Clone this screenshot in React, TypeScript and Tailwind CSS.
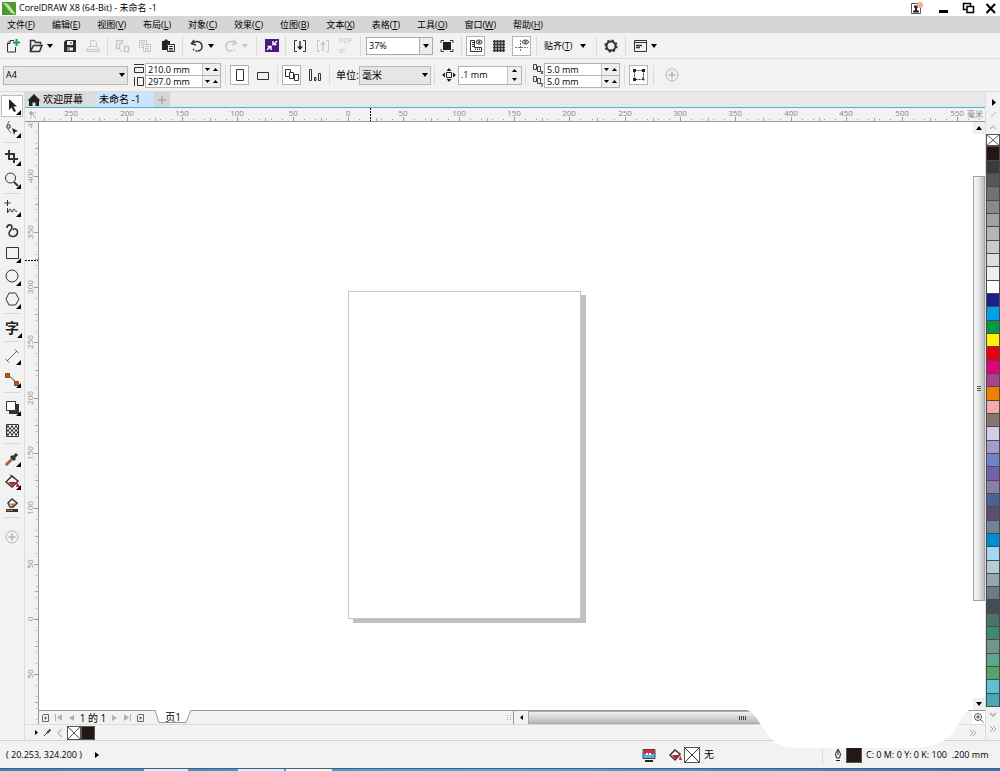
import type { ReactNode } from 'react'
import { clsx } from 'clsx'

const MENUS = [
  ['文件', 'F'],
  ['编辑', 'E'],
  ['视图', 'V'],
  ['布局', 'L'],
  ['对象', 'C'],
  ['效果', 'C'],
  ['位图', 'B'],
  ['文本', 'X'],
  ['表格', 'T'],
  ['工具', 'O'],
  ['窗口', 'W'],
  ['帮助', 'H'],
]

const PALETTE = [
  '#231815', '#3e3a39', '#595757', '#727171', '#898989', '#9fa0a0', '#b5b5b6',
  '#c9caca', '#dcdddd', '#efefef', '#ffffff', '#1d2088', '#00a0e9', '#009944',
  '#fff100', '#e60012', '#e4007f', '#a9438c', '#ee8200', '#f4aaa9', '#85756a',
  '#d3cce6', '#a899ca', '#6a86c6', '#7561aa', '#8d7cab', '#4a6492', '#57506f',
  '#71819b', '#008bd5', '#9fd9f6', '#b5ccd9', '#93a5ae', '#6c7b84', '#434d55',
  '#4f716c', '#3f8b70', '#73958f', '#58a78f', '#57a36a', '#5bc2d0', '#4aa8b4',
]

// pixels per millimetre at the current zoom, and where 0 sits on each ruler
const SCALE = 1.107
const ORIGIN_X = 309
const ORIGIN_Y = 497

interface IconProps {
  children: ReactNode
  size?: number
  className?: string
}

function Icon({ children, size = 16, className }: IconProps) {
  return (
    <svg
      width={size}
      height={size}
      viewBox={`0 0 ${size} ${size}`}
      fill="none"
      stroke="currentColor"
      className={clsx('shrink-0', className)}
      aria-hidden="true"
    >
      {children}
    </svg>
  )
}

function Caret({ className }: { className?: string }) {
  return (
    <svg width="6" height="4" viewBox="0 0 6 4" className={className} aria-hidden="true">
      <path d="M0 0h6L3 4z" fill="currentColor" />
    </svg>
  )
}

interface ToolButtonProps {
  label: string
  children: ReactNode
  framed?: boolean
  disabled?: boolean
}

function ToolButton({ label, children, framed, disabled }: ToolButtonProps) {
  return (
    <button
      type="button"
      aria-label={label}
      disabled={disabled}
      className={clsx(
        'flex w-[23px] shrink-0 items-center justify-center',
        disabled ? 'text-[#c6c6c6]' : 'text-[#333]',
      )}
    >
      <span
        className={clsx(
          'flex h-5 w-[19px] items-center justify-center',
          framed && 'border border-[#b4b4b4] bg-white',
        )}
      >
        {children}
      </span>
    </button>
  )
}

function CaretButton({ label, disabled }: { label: string; disabled?: boolean }) {
  return (
    <button
      type="button"
      aria-label={label}
      disabled={disabled}
      className={clsx('flex w-[11px] shrink-0 items-center', disabled ? 'text-[#c6c6c6]' : 'text-black')}
    >
      <Caret />
    </button>
  )
}

function Separator() {
  return (
    <div className="flex w-1.5 shrink-0 justify-center">
      <div className="h-5 w-px bg-[#dadada]" />
    </div>
  )
}

function TitleBar() {
  return (
    <header className="flex h-4 items-center bg-white px-0.5">
      <Icon size={14}>
        <path d="M0 1h14v13H0z" fill="#4f9a2d" stroke="none" />
        <path d="M1 1.500L6 3l7.500 10.500L9 12z" fill="#fff" stroke="none" />
        <path d="M2.500 2l7.500 11M4.500 2.500l7.500 11" stroke="#4f9a2d" strokeWidth=".6" />
      </Icon>
      <h1 className="ml-[3px] flex-1 text-[9px] leading-4 text-black">CorelDRAW X8 (64-Bit) - 未命名 -1</h1>
      <div className="flex items-center gap-3 text-black">
        <button type="button" aria-label="登录">
          <Icon size={14}>
            <path d="M1.500 2.500h9v10h-9z" stroke="#555" />
            <path d="M3 11.500h6v-1.500L7 9V7.500L8 6V4.500H4V6l1 1.500V9l-2 1z" fill="#222" stroke="none" />
            <circle cx="10" cy="4" r="3" fill="#f4b183" stroke="none" />
          </Icon>
        </button>
        <button type="button" aria-label="最小化">
          <Icon size={14}>
            <path d="M3 10.500h9" strokeWidth="3" />
          </Icon>
        </button>
        <button type="button" aria-label="还原">
          <Icon size={14}>
            <path d="M4.500 8.500h-3v-6h7v3" strokeWidth="1.500" />
            <path d="M5 5.500h6.500v6H5z" strokeWidth="1.500" />
          </Icon>
        </button>
        <button type="button" aria-label="关闭" className="-ml-1">
          <Icon size={14}>
            <path d="M2.500 3l8.500 9M11 3l-8.500 9" strokeWidth="2" />
          </Icon>
        </button>
      </div>
    </header>
  )
}

function MenuBar() {
  return (
    <nav className="flex h-[17px] items-center gap-[17px] bg-[#d6d6d6] pl-[7px]">
      {MENUS.map(([name, key]) => (
        <button key={name} type="button" className="shrink-0 text-[9px] leading-4 text-black">
          {name}(<span className="underline">{key}</span>)
        </button>
      ))}
    </nav>
  )
}

function StandardToolbar() {
  return (
    <div className="flex h-[26px] items-center border-b border-[#dcdcdc] pl-px">
      <ToolButton label="新建">
        <Icon>
          <path d="M9 2.500H5L2.500 5v9h8V9M5 3v2.500H2.500" />
          <path d="M11.500 1v7M8 4.500h7" stroke="#16a34a" strokeWidth="2" />
        </Icon>
      </ToolButton>
      <ToolButton label="打开">
        <Icon>
          <path d="M2.500 13V2.500h4l1 2h5v2M2.500 13.500h9l2.500-6H5.500z" strokeWidth="1.500" />
        </Icon>
      </ToolButton>
      <CaretButton label="最近的文件" />
      <ToolButton label="保存">
        <Icon>
          <path d="M2 4l2-2h10v12H2z" fill="#2b2b2b" stroke="none" />
          <path d="M5 3h6v4H5zM5 9.500h6v3H5z" fill="#f2f2f2" stroke="none" />
          <path d="M9 4v2M5 11h3" />
        </Icon>
      </ToolButton>
      <ToolButton label="打印" disabled>
        <Icon>
          <path d="M5.500 8V2.500h4l2 2V8M4 8.500l-2 2v3h12v-3l-2-2zM2 11.500h12" />
        </Icon>
      </ToolButton>
      <Separator />
      <ToolButton label="剪切" disabled>
        <Icon>
          <path d="M2.500 2.500h6v3M2.500 2.500v8h3v-5h3M11.500 8.500h3v5h-4v-5zM7 12v2" strokeWidth="1.500" />
        </Icon>
      </ToolButton>
      <ToolButton label="复制" disabled>
        <Icon>
          <path d="M6 9.500H2.500v-7h7V6M4 4.500h4M4 6.500h2M6.500 6.500h7v7h-7zM8 8.500h4M8 10.500h4M8 12h4" />
        </Icon>
      </ToolButton>
      <ToolButton label="粘贴">
        <Icon>
          <path d="M2 3h2l1-1.500h2L8 3h2v3H7v6H2z" fill="#222" stroke="none" />
          <path d="M7.500 6.500h7v7h-7zM9 8.500h4M9 10.500h4M9 12h4" />
        </Icon>
      </ToolButton>
      <Separator />
      <ToolButton label="撤消">
        <Icon>
          <path d="M5 2L2.500 5.500 7 7" strokeWidth="1.500" />
          <path d="M3 5.500C7 2 13 3.500 13 8.500c0 2.500-2 4.500-4.500 4.500" strokeWidth="1.500" />
          <path d="M8 13c-2 0-3.500-1-4-2.500" strokeWidth="1.500" strokeDasharray="1.500 1.500" />
        </Icon>
      </ToolButton>
      <CaretButton label="撤消列表" />
      <ToolButton label="重做" disabled>
        <Icon>
          <path d="M10.500 2L13 5.500 9 7" strokeWidth="1.500" />
          <path d="M12.500 5.500C9 2 3 3.500 3 8.500c0 2.500 2 4.500 4.500 4.500" strokeWidth="1.500" />
          <path d="M8 13c2 0 3.500-1 4-2.500" strokeWidth="1.500" strokeDasharray="1.500 1.500" />
        </Icon>
      </ToolButton>
      <CaretButton label="重做列表" disabled />
      <Separator />
      <ToolButton label="搜索内容">
        <Icon>
          <path d="M2 1h14v13H2z" fill="#4b1a80" stroke="none" />
          <path d="M4 12l3.500-3.500M14 3l-3.500 3.500M4.500 8.500H8V12M13.500 6.500H10V3" stroke="#fff" strokeWidth="1.500" />
        </Icon>
      </ToolButton>
      <Separator />
      <ToolButton label="导入">
        <Icon>
          <path d="M5 2.500H2.500v11H5M11 2.500h2.500v11H11" />
          <path d="M8 3v8" strokeWidth="1.500" />
          <path d="M5 8.500h6L8 12z" fill="#222" stroke="none" />
        </Icon>
      </ToolButton>
      <ToolButton label="导出" disabled>
        <Icon>
          <path d="M5 2.500H2.500v11H5M11 2.500h2.500v11H11" />
          <path d="M8 5v8" strokeWidth="1.500" />
          <path d="M5 6.500h6L8 3z" fill="currentColor" stroke="none" />
        </Icon>
      </ToolButton>
      <ToolButton label="发布为 PDF" disabled>
        <span className="flex flex-col text-left text-[7px] leading-[10px]">
          <span>PDF</span>
          <span>a!</span>
        </span>
      </ToolButton>
      <Separator />
      <div className="relative ml-[3px] mr-0.5 w-[67px] shrink-0">
        <select
          aria-label="缩放级别"
          className="block h-[18px] w-full appearance-none border border-[#a9a9a9] bg-white pl-0.5 text-[9px] text-black"
        >
          <option>37%</option>
        </select>
        <span className="pointer-events-none absolute inset-y-0 right-0 flex w-3.5 items-center justify-center border border-[#a9a9a9] bg-[#ececec]">
          <Caret />
        </span>
      </div>
      <ToolButton label="全屏预览">
        <Icon>
          <path d="M4 4h8v8H4z" fill="#222" stroke="none" />
          <path d="M2 5V2.500h3M11 2.500h3V5M14 11v2.500h-3M5 13.500H2V11" />
        </Icon>
      </ToolButton>
      <Separator />
      <ToolButton label="显示标尺" framed>
        <Icon>
          <path d="M2.500 2.500h4v7h7v4h-11zM4 4.500h2M4 6.500h2M4 8.500h2M7.500 12v-1.500M9.500 12v-1.500M11.500 12v-1.500" />
          <ellipse cx="11" cy="4" rx="3" ry="2" />
          <circle cx="11" cy="4" r=".8" />
        </Icon>
      </ToolButton>
      <ToolButton label="显示网格">
        <Icon>
          <path d="M2 3.500h12M2 6.500h12M2 9.500h12M2 12.500h12M3.500 2v12M6.500 2v12M9.500 2v12M12.500 2v12" strokeWidth="1.500" />
        </Icon>
      </ToolButton>
      <ToolButton label="显示辅助线" framed>
        <Icon>
          <path d="M1 9.500h13M6.500 2v12" stroke="#777" strokeDasharray="2 1" />
          <ellipse cx="11.500" cy="4" rx="3" ry="2" />
          <circle cx="11.500" cy="4" r=".8" />
        </Icon>
      </ToolButton>
      <Separator />
      <button type="button" className="flex w-[54px] shrink-0 items-center justify-between pl-[5px] pr-[7px] text-[9px] text-black">
        <span>
          贴齐(<span className="underline">T</span>)
        </span>
        <Caret />
      </button>
      <Separator />
      <ToolButton label="选项">
        <Icon>
          <circle cx="8" cy="8" r="4.500" strokeWidth="2" />
          <circle cx="8" cy="8" r="5.800" strokeWidth="1.600" strokeDasharray="2.200 2.355" />
        </Icon>
      </ToolButton>
      <Separator />
      <ToolButton label="应用程序启动器">
        <Icon>
          <path d="M2.500 2.500h12v11h-12zM2.500 4.500h12" />
          <path d="M4 7.500h6M4 9.500h4" strokeWidth="1.500" />
        </Icon>
      </ToolButton>
      <CaretButton label="启动器菜单" />
    </div>
  )
}

interface SpinFieldProps {
  label: string
  value: string
}

function SpinField({ label, value }: SpinFieldProps) {
  return (
    <div className="flex h-[13px] border border-[#b4b4b4] bg-white not-first:-mt-px">
      <input
        aria-label={label}
        defaultValue={value}
        className="w-14 bg-transparent pl-0.5 text-[9px] leading-none text-black outline-none"
      />
      <div className="flex w-[18px] items-center justify-around border-l border-[#c4c4c4] bg-[#efefef]">
        <button type="button" aria-label={`${label} 减少`}>
          <Icon size={5}>
            <path d="M0 1h5L2.500 4z" fill="#000" stroke="none" />
          </Icon>
        </button>
        <button type="button" aria-label={`${label} 增加`}>
          <Icon size={5}>
            <path d="M0 4h5L2.500 1z" fill="#000" stroke="none" />
          </Icon>
        </button>
      </div>
    </div>
  )
}

interface ComboProps {
  id: string
  label: string
  value: string
  className: string
}

function Combo({ id, label, value, className }: ComboProps) {
  return (
    <div className={clsx('relative shrink-0', className)}>
      <select
        id={id}
        aria-label={label}
        className="block h-[19px] w-full appearance-none border border-[#b9b9b9] bg-[#e6e6e6] pl-0.5 text-black"
      >
        <option>{value}</option>
      </select>
      <span className="pointer-events-none absolute inset-y-0 right-[3px] flex items-center">
        <Caret />
      </span>
    </div>
  )
}

function PropertyBar() {
  return (
    <div className="flex h-[33px] items-center border-b border-[#dcdcdc] pl-[3px]">
      <Combo id="page-size" label="页面大小" value="A4" className="w-[125px] text-[9px]" />
      <div className="ml-[5px] flex flex-col text-[#333]">
        <Icon size={12}>
          <path d="M1 1.500h10M1.500 4.500h9v5h-9z" />
        </Icon>
        <Icon size={12}>
          <path d="M1.500 2v9M4.500 2.500h6v8h-6z" />
        </Icon>
      </div>
      <div className="mr-px flex flex-col">
        <SpinField label="页面宽度" value="210.0 mm" />
        <SpinField label="页面高度" value="297.0 mm" />
      </div>
      <Separator />
      <ToolButton label="纵向" framed>
        <Icon>
          <path d="M4.500 2.500h7v11h-7z" />
        </Icon>
      </ToolButton>
      <ToolButton label="横向">
        <Icon>
          <path d="M2.500 5.500h11v7h-11z" />
        </Icon>
      </ToolButton>
      <Separator />
      <ToolButton label="所有页面" framed>
        <Icon>
          <path d="M1.500 2.500h5v7h-5z" />
          <path d="M5.500 5.500h4v6h-4zM10.500 7.500h4v6h-4z" fill="#fff" />
        </Icon>
      </ToolButton>
      <ToolButton label="当前页">
        <Icon>
          <path d="M2.500 2.500h2v11h-2zM7.500 10.500h1.500v3H7.500zM11.500 6.500h2v7h-2z" />
        </Icon>
      </ToolButton>
      <Separator />
      <label htmlFor="units" className="w-[27px] shrink-0 whitespace-nowrap pl-1 text-[10px] text-black">
        单位:
      </label>
      <Combo id="units" label="单位" value="毫米" className="w-[72px] text-[10px]" />
      <Separator />
      <Icon className="ml-1 mr-px text-[#222]">
        <path d="M5.500 5.500h5v5h-5z" />
        <path d="M8 1l2.500 3h-5zM8 15l2.500-3h-5zM1 8l3-2.500v5zM15 8l-3-2.500v5z" fill="currentColor" stroke="none" />
      </Icon>
      <div className="flex h-[19px] w-16 shrink-0 border border-[#b4b4b4] bg-white">
        <input
          aria-label="微调距离"
          defaultValue=".1 mm"
          className="w-12 bg-transparent pl-0.5 text-[9px] text-black outline-none"
        />
        <div className="flex w-3.5 flex-col items-center justify-around border-l border-[#c4c4c4] bg-[#efefef]">
          <button type="button" aria-label="微调增加">
            <Icon size={5}>
              <path d="M0 4h5L2.500 1z" fill="#000" stroke="none" />
            </Icon>
          </button>
          <button type="button" aria-label="微调减少">
            <Icon size={5}>
              <path d="M0 1h5L2.500 4z" fill="#000" stroke="none" />
            </Icon>
          </button>
        </div>
      </div>
      <Separator />
      <div className="ml-1 flex flex-col text-[#444]">
        <Icon size={12}>
          <path d="M1.500 1.500h3v5h-3zM5.500 3.500h3v5h-3zM9 8l2 3M11 8l-2 3" />
        </Icon>
        <Icon size={12}>
          <path d="M1.500 1.500h3v5h-3zM5.500 3.500h3v5h-3zM9 8l1 1.500L11 8M10 9.500V12" />
        </Icon>
      </div>
      <div className="mr-px flex flex-col">
        <SpinField label="再制距离 X" value="5.0 mm" />
        <SpinField label="再制距离 Y" value="5.0 mm" />
      </div>
      <Separator />
      <ToolButton label="将所有对象视为已填充" framed>
        <Icon>
          <path d="M3.500 3.500h9v9h-9z" strokeDasharray="2 1" />
          <path d="M2 2h3v3H2zM11 2h3v3h-3zM2 11h3v3H2zM11 10l3 3-2 .5z" fill="#222" stroke="none" />
        </Icon>
      </ToolButton>
      <Separator />
      <button type="button" aria-label="快速自定义" className="ml-2 text-[#b5b5b5]">
        <Icon>
          <circle cx="8" cy="8" r="6" />
          <path d="M8 4.500v7M4.500 8h7" strokeWidth="1.500" />
        </Icon>
      </button>
    </div>
  )
}

interface ToolProps {
  label: string
  children: ReactNode
  active?: boolean
  flyout?: boolean
}

function Tool({ label, children, active, flyout }: ToolProps) {
  return (
    <button
      type="button"
      aria-label={label}
      className="flex h-[23px] items-center justify-center text-[#333]"
    >
      <span className={clsx('flex h-5 w-5', active && 'bg-white outline outline-[#bdbdbd]')}>
        <Icon size={20}>
          {children}
          {flyout && <path d="M19 14v5h-5z" fill="#000" stroke="none" />}
        </Icon>
      </span>
    </button>
  )
}

function ToolDivider() {
  return (
    <div className="flex h-[5px] items-center px-1">
      <div className="h-px flex-1 bg-[#dadada]" />
    </div>
  )
}

function Toolbox() {
  return (
    <aside className="flex w-[25px] shrink-0 flex-col border-r border-[#dcdcdc] pt-0.5">
      <Tool label="选择" active flyout>
        <path d="M7 3v11l2.500-2.500L12 16l2-1-2.500-4.500H15z" fill="#222" stroke="none" />
      </Tool>
      <Tool label="形状" flyout>
        <path d="M7.500 2c-4 5-2 8 1.500 12" stroke="#666" />
        <path d="M5 6h3v3H5z" fill="#fff" />
        <path d="M10 9l6 3-3 1-1 3z" fill="#222" stroke="none" />
      </Tool>
      <ToolDivider />
      <Tool label="裁剪" flyout>
        <path d="M7 3v9h9M3 7h9v9" strokeWidth="2" />
      </Tool>
      <Tool label="缩放" flyout>
        <circle cx="8.500" cy="8" r="5" />
        <path d="M12 12l4 4" strokeWidth="2" />
      </Tool>
      <ToolDivider />
      <Tool label="手绘" flyout>
        <path d="M5.500 2v6M2.500 5h6" />
        <path d="M5.500 10v5M5.500 14c2 1 1-3 2.500-3s.5 3 2 3 .5-3 2-3 .5 3 3 2.500" />
      </Tool>
      <Tool label="艺术笔">
        <path d="M5 7c0-4 5-4 5-1 0 3-3 4-3 6.500 0 4.500 8.500 4 8.500-1.500 0-3.500-3.500-4-4.500-2" strokeWidth="1.600" />
      </Tool>
      <Tool label="矩形" flyout>
        <path d="M4.500 3.500h12v11h-12z" />
      </Tool>
      <Tool label="椭圆形" flyout>
        <circle cx="10" cy="9" r="6" />
      </Tool>
      <Tool label="多边形" flyout>
        <path d="M7 3h6.500l3.500 6-3.500 6H7L4 9z" />
      </Tool>
      <ToolDivider />
      <button
        type="button"
        aria-label="文本"
        className="flex h-[23px] items-center justify-center text-sm font-bold text-[#222]"
      >
        <span className="relative flex h-5 w-5 items-center justify-center">
          字
          <Icon size={5} className="absolute bottom-0 right-0">
            <path d="M5 0v5H0z" fill="#000" stroke="none" />
          </Icon>
        </span>
      </button>
      <ToolDivider />
      <Tool label="平行度量" flyout>
        <path d="M5 15L15 5M3.500 13l3.500 3.500M13 3.500L16.500 7" stroke="#666" />
      </Tool>
      <Tool label="连接器" flyout>
        <path d="M6 6l9 8" />
        <path d="M3.500 4.500h4v4h-4zM12.500 12.500h4v4h-4z" fill="#b45a1e" stroke="#8a4516" />
      </Tool>
      <ToolDivider />
      <Tool label="阴影" flyout>
        <path d="M7 15.500h8.500V7" strokeWidth="3" />
        <path d="M4.500 4.500h9v9h-9z" fill="#fff" />
      </Tool>
      <Tool label="透明度">
        <path d="M4.500 4.500h12v12h-12z" />
        <path
          d="M5 6.500h12M5 10.500h12M5 14.500h12M7 8.500h10M7 12.500h10"
          strokeWidth="2"
          strokeDasharray="2 2"
        />
      </Tool>
      <ToolDivider />
      <Tool label="颜色滴管" flyout>
        <path d="M4 17l7-7" stroke="#7d7d7d" strokeWidth="3" />
        <path d="M4 17l4-4" stroke="#c0572a" strokeWidth="2" />
        <path d="M9 8l4 4M12 9l3-3" strokeWidth="3" />
      </Tool>
      <Tool label="交互式填充" flyout>
        <path d="M4 11l6-6 6 5-6 6z" fill="#fff" strokeWidth="1.500" />
        <path d="M6 11h8l-4 4z" fill="#d9182b" stroke="none" />
        <path d="M15 11l3 5h-4z" fill="#d9182b" stroke="none" />
        <path d="M8 3.500l4 4" />
      </Tool>
      <Tool label="智能填充">
        <path d="M6 9l4-4 5 4-4 4H8z" fill="#fff" strokeWidth="1.500" />
        <path d="M7 9.500h7l-3 3z" fill="#d46a2c" stroke="none" />
        <path d="M4 16.500h12" strokeWidth="3" />
        <path d="M4.500 16.500H11" stroke="#d46a2c" />
      </Tool>
      <ToolDivider />
      <div className="mt-[7px] flex justify-center text-[#b5b5b5]">
        <button type="button" aria-label="自定义工具箱">
          <Icon size={20}>
            <circle cx="10" cy="10" r="6" />
            <path d="M10 6.500v7M6.500 10h7" strokeWidth="1.500" />
          </Icon>
        </button>
      </div>
    </aside>
  )
}

function DocumentTabs() {
  return (
    <div className="flex h-4 border-b border-[#45b5dc] bg-[#e8e8e8] text-[10px] leading-[15px] text-black">
      <button type="button" className="flex w-[70px] items-center gap-0.5 bg-[#dcdcdc] pl-0.5">
        <Icon size={14}>
          <path d="M7 1l6.500 6.500H12V13H8.500V9.500h-3V13H2V7.500H.5z" fill="#222" stroke="none" />
        </Icon>
        欢迎屏幕
      </button>
      <button type="button" className="w-[59px] bg-[#cbe4fb] pl-1 text-left">
        未命名 -1
      </button>
      <button type="button" aria-label="新建文档" className="flex w-4 items-center justify-center bg-[#d4d4d4] text-[#aaa]">
        <Icon size={10}>
          <path d="M5 1v8M1 5h8" strokeWidth="1.500" />
        </Icon>
      </button>
    </div>
  )
}

// one entry per 10 mm
const STEPS = Array.from({ length: 240 }, (_, i) => i - 80)

function HorizontalRuler() {
  return (
    <svg className="h-[13px] min-w-0 flex-1 text-[8px]" aria-hidden="true">
      {STEPS.map((step) => {
        const x = Math.round(ORIGIN_X + step * 10 * SCALE)
        const major = step % 5 === 0
        return (
          <g key={step}>
            <rect x={x} y={major ? 9 : 11} width="1" height={major ? 4 : 1} fill="#999" />
            {major && (
              <rect x={Math.round(x + 25 * SCALE)} y="10" width="1" height="3" fill="#aaa" />
            )}
            {major && step >= -25 && step <= 55 && (
              <text x={x} y="8" textAnchor="middle" fill="#888">
                {Math.abs(step * 10)}
              </text>
            )}
          </g>
        )
      })}
      <path d="M331.500 0v13" stroke="#000" strokeDasharray="2 1" />
    </svg>
  )
}

function VerticalRuler() {
  return (
    <svg className="w-[13px] shrink-0 text-[8px]" aria-hidden="true">
      {STEPS.map((step) => {
        const y = Math.round(ORIGIN_Y - step * 10 * SCALE)
        const major = step % 5 === 0
        return (
          <g key={step}>
            <rect x={major ? 9 : 11} y={y} width={major ? 4 : 1} height="1" fill="#999" />
            {major && (
              <rect x="10" y={Math.round(y - 25 * SCALE)} width="3" height="1" fill="#aaa" />
            )}
            {major && step >= -5 && step <= 45 && (
              <text x="8" y={y} textAnchor="middle" fill="#888" transform={`rotate(-90 8 ${y})`}>
                {Math.abs(step * 10)}
              </text>
            )}
          </g>
        )
      })}
      <path d="M0 138.500h13" stroke="#000" strokeDasharray="2 1" />
    </svg>
  )
}

function VerticalScrollbar() {
  return (
    <div className="flex w-3 shrink-0 flex-col">
      <button type="button" aria-label="向上滚动" className="flex h-3 items-center justify-center bg-[#efefef]">
        <Caret className="rotate-180" />
      </button>
      <div className="flex flex-1 flex-col pb-[97px] pt-[42px]">
        <div className="flex flex-1 flex-col items-center justify-center gap-px border border-[#a0a0a0] bg-linear-to-r from-[#f6f6f6] via-[#e6e6e6] to-[#bdbdbd]">
          <div className="h-px w-1 bg-[#555]" />
          <div className="h-px w-1 bg-[#555]" />
          <div className="h-px w-1 bg-[#555]" />
        </div>
      </div>
      <button type="button" aria-label="向下滚动" className="flex h-3 items-center justify-center bg-[#efefef]">
        <Caret />
      </button>
    </div>
  )
}

function PageNavigator() {
  return (
    <div className="flex h-3.5 items-stretch border-t border-[#969696] text-[#b0b0b0]">
      <div className="flex w-[116px] shrink-0 items-center justify-between pl-0.5 pr-2.5">
        <button type="button" aria-label="在前面添加页" className="text-[#666]">
          <Icon size={9}>
            <path d="M1.500 2.500l1-1h5v7h-6zM3 5h3M4.500 3.500v3" />
          </Icon>
        </button>
        <button type="button" aria-label="第一页">
          <Icon size={9}>
            <path d="M1.500 1v7" />
            <path d="M8 1v7L3 4.500z" fill="currentColor" stroke="none" />
          </Icon>
        </button>
        <button type="button" aria-label="上一页">
          <Icon size={8}>
            <path d="M7 1v6L2 4z" fill="currentColor" stroke="none" />
          </Icon>
        </button>
        <span className="whitespace-pre text-[10px] leading-3 text-black">1 的 1</span>
        <button type="button" aria-label="下一页">
          <Icon size={8}>
            <path d="M1 1v6l5-3z" fill="currentColor" stroke="none" />
          </Icon>
        </button>
        <button type="button" aria-label="最后一页">
          <Icon size={9}>
            <path d="M7.500 1v7" />
            <path d="M1 1v7l5-3.500z" fill="currentColor" stroke="none" />
          </Icon>
        </button>
        <button type="button" aria-label="在后面添加页" className="text-[#666]">
          <Icon size={9}>
            <path d="M1.500 2.500l1-1h5v7h-6zM3 5h3M4.500 3.500v3" />
          </Icon>
        </button>
      </div>
      <button type="button" className="relative -mt-px w-9 shrink-0 text-[10px] leading-[13px] text-black">
        <svg className="absolute inset-0" width="36" height="14" aria-hidden="true">
          <path d="M0 0l4 12.500h27L36 0" fill="#fff" stroke="#969696" />
        </svg>
        <span className="relative">页1</span>
      </button>
      <div className="flex w-[323px] items-center justify-end border-r border-[#969696] pr-px">
        <Icon size={6}>
          <path d="M1.500 0v6M4.500 0v6" strokeDasharray="1 1" />
        </Icon>
      </div>
      <button type="button" aria-label="向左滚动" className="flex w-3.5 items-center justify-center text-black">
        <Icon size={5}>
          <path d="M4 0v5L1 2.500z" fill="currentColor" stroke="none" />
        </Icon>
      </button>
      <div className="mr-4 flex flex-1 items-center justify-center gap-px border border-[#a8a8a8] bg-linear-to-b from-[#f0f0f0] to-[#b8b8b8]">
        <div className="h-1 w-px bg-[#444]" />
        <div className="h-1 w-px bg-[#444]" />
        <div className="h-1 w-px bg-[#444]" />
        <div className="h-1 w-px bg-[#444]" />
      </div>
      <button type="button" aria-label="导航器" className="flex w-[13px] items-center justify-center bg-white text-[#555]">
        <Icon size={11}>
          <circle cx="5" cy="5" r="3.500" />
          <path d="M7.500 7.500l3 3M3 5h4M5 3v4" />
        </Icon>
      </button>
    </div>
  )
}

function NoColor({ className }: { className?: string }) {
  return (
    <svg
      viewBox="0 0 14 14"
      preserveAspectRatio="none"
      className={clsx('border border-[#555] bg-white', className)}
      stroke="#333"
      aria-hidden="true"
    >
      <path d="M0 0l14 14M14 0L0 14" />
    </svg>
  )
}

function DocumentPalette() {
  return (
    <div className="flex h-4 items-center border-t border-[#dcdcdc] pl-[9px]">
      <button type="button" aria-label="文档调色板菜单" className="text-black">
        <Icon size={5}>
          <path d="M1 0v5l3-2.500z" fill="currentColor" stroke="none" />
        </Icon>
      </button>
      <button type="button" aria-label="添加颜色" className="ml-1 text-[#444]">
        <Icon size={9}>
          <path d="M1 8l4-4" />
          <path d="M4 5l3.500-3.500" strokeWidth="2" />
        </Icon>
      </button>
      <button type="button" aria-label="向前" className="ml-1 mr-[3px] text-[#c0c0c0]">
        <Icon size={8}>
          <path d="M6 0L2 4l4 4" strokeWidth="1.500" />
        </Icon>
      </button>
      <button type="button" aria-label="无色">
        <NoColor className="size-3.5" />
      </button>
      <button type="button" aria-label="黑色" className="size-3.5 border border-[#555] bg-[#231815]" />
      <button type="button" aria-label="更多" className="ml-auto mr-2 text-[#aaa]">
        <Icon size={8}>
          <path d="M1 1l3 3-3 3M4 1l3 3-3 3" />
        </Icon>
      </button>
    </div>
  )
}

function Workspace() {
  return (
    <main className="relative flex min-w-0 flex-1 flex-col">
      <DocumentTabs />
      <div className="relative flex h-3.5 border-b border-[#999] text-[#888]">
        <div className="flex w-3.5 shrink-0 items-center justify-center">
          <Icon size={9}>
            <path d="M1 3h7M3 1v7M3 3l5 5" strokeDasharray="2 1" />
          </Icon>
        </div>
        <HorizontalRuler />
        <span className="absolute right-0.5 top-0 bg-[#f2f2f2] text-[8px] leading-[11px]">毫米</span>
      </div>
      <div className="flex flex-1">
        <VerticalRuler />
        <div className="flex min-w-0 flex-1 flex-col border-l border-[#999]">
          <div className="flex flex-1 bg-white">
            <div className="relative flex-1 overflow-hidden">
              <div className="absolute left-[309px] top-[169px] h-[328px] w-[233px] border border-[#c6c6c6] bg-white shadow-[5px_4px_0_#c0c0c0]" />
            </div>
            <VerticalScrollbar />
          </div>
          <PageNavigator />
        </div>
      </div>
      <DocumentPalette />
      <svg className="absolute -bottom-2 right-4 z-10" width="222" height="38" viewBox="0 0 222 38" aria-hidden="true">
        <path
          d="M0 0C10 4 12 14 20 24C28 34 36 38 52 38H165C190 38 200 30 208 20C213 13 213 6 222 0Z"
          fill="#fff"
        />
      </svg>
    </main>
  )
}

function ColorPalette() {
  return (
    <aside className="flex w-[15px] shrink-0 flex-col border-l border-[#dcdcdc]">
      <div className="flex h-[42px] flex-col items-center justify-end gap-[5px] pb-[3px] text-[#c0c0c0]">
        <button type="button" aria-label="调色板菜单" className="text-black">
          <Icon size={7}>
            <path d="M2 0v7l4-3.500z" fill="currentColor" stroke="none" />
          </Icon>
        </button>
        <button type="button" aria-label="取色">
          <Icon size={7}>
            <path d="M1 6l5-5" />
          </Icon>
        </button>
        <button type="button" aria-label="向上">
          <Icon size={8}>
            <path d="M1 6l3-3 3 3" strokeWidth="1.500" />
          </Icon>
        </button>
      </div>
      <div className="flex flex-1 flex-col">
        <button type="button" aria-label="无填充" className="flex min-h-0 flex-1">
          <NoColor className="h-full w-full" />
        </button>
        {PALETTE.map((color) => (
          <button
            key={color}
            type="button"
            aria-label={color}
            className="min-h-0 flex-1 border border-b-0 border-[#4a4a4a]"
            style={{ backgroundColor: color }}
          />
        ))}
      </div>
      <div className="flex h-[34px] flex-col items-center gap-1.5 border-t border-[#4a4a4a] pt-1 text-[#aaa]">
        <button type="button" aria-label="向下">
          <Icon size={8}>
            <path d="M1 2l3 3 3-3" strokeWidth="1.500" />
          </Icon>
        </button>
        <button type="button" aria-label="展开">
          <Icon size={8}>
            <path d="M1 1l3 3-3 3M4 1l3 3-3 3" />
          </Icon>
        </button>
      </div>
    </aside>
  )
}

function StatusBar() {
  return (
    <footer className="flex h-7 items-center border-t border-[#d2d2d2] pl-1.5 pr-3 text-[9px] text-black">
      <span className="w-[88px]">( 20.253, 324.200 )</span>
      <button type="button" aria-label="状态栏菜单">
        <Icon size={6}>
          <path d="M1 0v6l4-3z" fill="currentColor" stroke="none" />
        </Icon>
      </button>
      <div className="ml-auto flex w-[181px] items-center">
        <Icon>
          <path d="M2 2.500h12v9H2z" fill="#56b6e6" stroke="#444" />
          <path d="M3 3h10v4H3z" fill="#e02636" stroke="none" />
          <path d="M5 7h6" stroke="#fff" strokeWidth="2" strokeDasharray="2 1" />
          <path d="M4 14h8" stroke="#222" strokeWidth="2" />
        </Icon>
        <Icon className="ml-[11px]">
          <path d="M2 8l5-5 5 4-5 6z" fill="#fff" stroke="#333" strokeWidth="1.500" />
          <path d="M4 8h7l-4 4z" fill="#d9182b" stroke="none" />
          <path d="M12 8l2 5h-3z" fill="#d9182b" stroke="none" />
        </Icon>
        <NoColor className="size-4" />
        <span className="ml-1 text-[10px]">无</span>
      </div>
      <div className="flex h-5 items-center border-l border-[#dcdcdc] pl-[7px]">
        <Icon>
          <path d="M8 2l2.500 5L9.500 11h-3L5.500 7zM8 3v5M6 13.500h4" stroke="#222" />
        </Icon>
        <span className="size-4 border border-[#555] bg-[#231815]" />
        <span className="ml-1 w-[122px] whitespace-pre">C: 0 M: 0 Y: 0 K: 100  .200 mm</span>
      </div>
    </footer>
  )
}

function Taskbar() {
  return (
    <div className="flex h-[3px] gap-0.5 border-t border-[#36648c] bg-linear-to-r from-[#3f86ad] via-[#5aa9da] to-[#3d74ad] pl-36">
      <div className="w-11 bg-[#dcecf6]" />
      <div className="ml-12 w-[46px] bg-[#dcecf6]" />
      <div className="w-[46px] bg-[#f3f3e6]" />
    </div>
  )
}

export default function App() {
  return (
    <div className="flex min-h-screen flex-col overflow-hidden bg-[#f2f2f2] font-['Open_Sans','Noto_Sans_CJK_SC',sans-serif]">
      <TitleBar />
      <MenuBar />
      <StandardToolbar />
      <PropertyBar />
      <div className="flex flex-1">
        <Toolbox />
        <Workspace />
        <ColorPalette />
      </div>
      <StatusBar />
      <Taskbar />
    </div>
  )
}
